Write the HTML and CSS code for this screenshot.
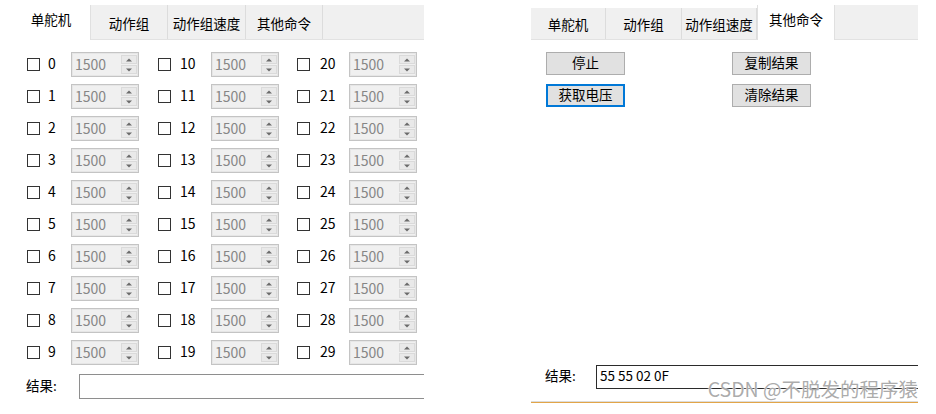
FILE: index.html
```html
<!DOCTYPE html>
<html lang="zh">
<head>
<meta charset="utf-8">
<title>舵机控制</title>
<link rel="stylesheet" href="styles.css">
</head>
<body>
<div class="page">
  <section class="panel left">
    <div class="tabs">
      <div class="tab sel first w91">单舵机</div>
      <div class="tab w77">动作组</div>
      <div class="tab w78">动作组速度</div>
      <div class="tab w77">其他命令</div>
      <div class="tab-fill"></div>
    </div>
    <div class="servos">
      <div class="col c1">
        <div class="item"><span class="cb"></span><span class="lbl">0</span><div class="spin"><span class="val">1500</span><span class="btns"><span class="up"></span><span class="down"></span></span></div></div>
        <div class="item"><span class="cb"></span><span class="lbl">1</span><div class="spin"><span class="val">1500</span><span class="btns"><span class="up"></span><span class="down"></span></span></div></div>
        <div class="item"><span class="cb"></span><span class="lbl">2</span><div class="spin"><span class="val">1500</span><span class="btns"><span class="up"></span><span class="down"></span></span></div></div>
        <div class="item"><span class="cb"></span><span class="lbl">3</span><div class="spin"><span class="val">1500</span><span class="btns"><span class="up"></span><span class="down"></span></span></div></div>
        <div class="item"><span class="cb"></span><span class="lbl">4</span><div class="spin"><span class="val">1500</span><span class="btns"><span class="up"></span><span class="down"></span></span></div></div>
        <div class="item"><span class="cb"></span><span class="lbl">5</span><div class="spin"><span class="val">1500</span><span class="btns"><span class="up"></span><span class="down"></span></span></div></div>
        <div class="item"><span class="cb"></span><span class="lbl">6</span><div class="spin"><span class="val">1500</span><span class="btns"><span class="up"></span><span class="down"></span></span></div></div>
        <div class="item"><span class="cb"></span><span class="lbl">7</span><div class="spin"><span class="val">1500</span><span class="btns"><span class="up"></span><span class="down"></span></span></div></div>
        <div class="item"><span class="cb"></span><span class="lbl">8</span><div class="spin"><span class="val">1500</span><span class="btns"><span class="up"></span><span class="down"></span></span></div></div>
        <div class="item"><span class="cb"></span><span class="lbl">9</span><div class="spin"><span class="val">1500</span><span class="btns"><span class="up"></span><span class="down"></span></span></div></div>
      </div>
      <div class="col c2">
        <div class="item"><span class="cb"></span><span class="lbl">10</span><div class="spin"><span class="val">1500</span><span class="btns"><span class="up"></span><span class="down"></span></span></div></div>
        <div class="item"><span class="cb"></span><span class="lbl">11</span><div class="spin"><span class="val">1500</span><span class="btns"><span class="up"></span><span class="down"></span></span></div></div>
        <div class="item"><span class="cb"></span><span class="lbl">12</span><div class="spin"><span class="val">1500</span><span class="btns"><span class="up"></span><span class="down"></span></span></div></div>
        <div class="item"><span class="cb"></span><span class="lbl">13</span><div class="spin"><span class="val">1500</span><span class="btns"><span class="up"></span><span class="down"></span></span></div></div>
        <div class="item"><span class="cb"></span><span class="lbl">14</span><div class="spin"><span class="val">1500</span><span class="btns"><span class="up"></span><span class="down"></span></span></div></div>
        <div class="item"><span class="cb"></span><span class="lbl">15</span><div class="spin"><span class="val">1500</span><span class="btns"><span class="up"></span><span class="down"></span></span></div></div>
        <div class="item"><span class="cb"></span><span class="lbl">16</span><div class="spin"><span class="val">1500</span><span class="btns"><span class="up"></span><span class="down"></span></span></div></div>
        <div class="item"><span class="cb"></span><span class="lbl">17</span><div class="spin"><span class="val">1500</span><span class="btns"><span class="up"></span><span class="down"></span></span></div></div>
        <div class="item"><span class="cb"></span><span class="lbl">18</span><div class="spin"><span class="val">1500</span><span class="btns"><span class="up"></span><span class="down"></span></span></div></div>
        <div class="item"><span class="cb"></span><span class="lbl">19</span><div class="spin"><span class="val">1500</span><span class="btns"><span class="up"></span><span class="down"></span></span></div></div>
      </div>
      <div class="col c3">
        <div class="item"><span class="cb"></span><span class="lbl">20</span><div class="spin"><span class="val">1500</span><span class="btns"><span class="up"></span><span class="down"></span></span></div></div>
        <div class="item"><span class="cb"></span><span class="lbl">21</span><div class="spin"><span class="val">1500</span><span class="btns"><span class="up"></span><span class="down"></span></span></div></div>
        <div class="item"><span class="cb"></span><span class="lbl">22</span><div class="spin"><span class="val">1500</span><span class="btns"><span class="up"></span><span class="down"></span></span></div></div>
        <div class="item"><span class="cb"></span><span class="lbl">23</span><div class="spin"><span class="val">1500</span><span class="btns"><span class="up"></span><span class="down"></span></span></div></div>
        <div class="item"><span class="cb"></span><span class="lbl">24</span><div class="spin"><span class="val">1500</span><span class="btns"><span class="up"></span><span class="down"></span></span></div></div>
        <div class="item"><span class="cb"></span><span class="lbl">25</span><div class="spin"><span class="val">1500</span><span class="btns"><span class="up"></span><span class="down"></span></span></div></div>
        <div class="item"><span class="cb"></span><span class="lbl">26</span><div class="spin"><span class="val">1500</span><span class="btns"><span class="up"></span><span class="down"></span></span></div></div>
        <div class="item"><span class="cb"></span><span class="lbl">27</span><div class="spin"><span class="val">1500</span><span class="btns"><span class="up"></span><span class="down"></span></span></div></div>
        <div class="item"><span class="cb"></span><span class="lbl">28</span><div class="spin"><span class="val">1500</span><span class="btns"><span class="up"></span><span class="down"></span></span></div></div>
        <div class="item"><span class="cb"></span><span class="lbl">29</span><div class="spin"><span class="val">1500</span><span class="btns"><span class="up"></span><span class="down"></span></span></div></div>
      </div>
    </div>
    <div class="result result-left">
      <span class="rlabel">结果:</span>
      <div class="rbox"></div>
    </div>
  </section>

  <section class="panel right">
    <div class="tabs tabs-right">
      <div class="tab w75">单舵机</div>
      <div class="tab w76">动作组</div>
      <div class="tab w75">动作组速度</div>
      <div class="tab sel w78">其他命令</div>
      <div class="tab-fill"></div>
    </div>
    <div class="cmds">
      <button class="btn">停止</button>
      <button class="btn">复制结果</button>
      <button class="btn focus">获取电压</button>
      <button class="btn">清除结果</button>
    </div>
    <div class="result result-right">
      <span class="rlabel">结果:</span>
      <div class="rbox dark">55 55 02 0F</div>
    </div>
    <div class="statusline"></div>
  </section>

  <div class="watermark">CSDN @不脱发的程序猿</div>
</div>
</body>
</html>
```

FILE: styles.css
```css
* { box-sizing: border-box; }

html, body {
  margin: 0;
  padding: 0;
  background: #ffffff;
}

body {
  font-family: "Noto Sans CJK SC", "Noto Sans", sans-serif;
  font-size: 13.5px;
  color: #000000;
}

.page {
  position: relative;
  width: 936px;
  height: 414px;
  display: flex;
  align-items: flex-start;
  overflow: hidden;
}

.panel {
  display: flex;
  flex-direction: column;
  overflow: hidden;
}

.left {
  width: 424px;
}

.right {
  width: 387px;
  height: 403px;
  margin-left: 107px;
}

/* ---------- tabs ---------- */
.tabs {
  display: flex;
  margin-top: 5px;
  height: 35px;
  border-bottom: 1px solid #e2e2e2;
}

.tab {
  display: flex;
  align-items: center;
  justify-content: center;
  background: #f0f0f0;
  border-right: 1px solid #dcdcdc;
  padding-top: 3px;
  white-space: nowrap;
  line-height: 1;
}

.tab.sel {
  background: #ffffff;
  padding-top: 0;
  padding-bottom: 5px;
  border-right: 1px solid #e0e0e0;
  margin-bottom: -1px;
}

.tab.sel.first {
  padding-left: 12px;
}

.tabs-right .tab {
  margin-top: 3px;
}

.tabs-right .tab.sel {
  margin-top: 0;
  border-left: 1px solid #e0e0e0;
}

.tab-fill {
  flex: 1;
  background: #f0f0f0;
}

.w91 { width: 91px; }
.w77 { width: 77px; }
.w78 { width: 78px; }
.w75 { width: 75px; }
.w76 { width: 76px; }

/* ---------- servo grid ---------- */
.servos {
  display: flex;
  margin-top: 12px;
  padding-left: 27px;
}

.col {
  display: flex;
  flex-direction: column;
  gap: 7px;
}

.c1 { width: 131px; }
.c2 { width: 139px; }
.c3 { width: 127px; }

.item {
  display: flex;
  align-items: center;
  height: 25px;
}

.cb {
  width: 13px;
  height: 13px;
  border: 1px solid #333333;
  background: #ffffff;
  flex: none;
}

.lbl {
  padding-left: 8px;
  line-height: 1;
  padding-bottom: 3px;
  font-size: 14px;
}

.c1 .lbl { width: 31px; }
.c2 .lbl { width: 40px; padding-left: 9px; }
.c3 .lbl { width: 39px; padding-left: 10px; }

.spin {
  width: 68px;
  height: 25px;
  border: 1px solid #c4c4c4;
  box-shadow: inset 0 0 0 1px #e6e6e6;
  background: #f0f0f0;
  display: flex;
  align-items: center;
  justify-content: space-between;
  padding: 2px 1px 2px 3px;
  flex: none;
}

.val {
  color: #868686;
  line-height: 1;
  padding-bottom: 2px;
  font-size: 14px;
}

.btns {
  display: flex;
  flex-direction: column;
  width: 16px;
  height: 100%;
  gap: 1px;
}

.up, .down {
  flex: 1;
  background: #e9e9e9;
  border: 1px solid #dadada;
  position: relative;
}

.up::after, .down::after {
  content: "";
  position: absolute;
  left: 50%;
  top: 50%;
  width: 0;
  height: 0;
  border-left: 3px solid transparent;
  border-right: 3px solid transparent;
  transform: translate(-50%, -50%);
}

.up::after { border-bottom: 3px solid #6a6a6a; }
.down::after { border-top: 3px solid #6a6a6a; }

/* ---------- result rows ---------- */
.result {
  display: flex;
  align-items: center;
  white-space: nowrap;
}

.result-left {
  margin-top: 9px;
  padding-left: 26px;
}

.result-left .rlabel { width: 53px; }

.rlabel {
  flex: none;
  line-height: 1;
  padding-bottom: 2px;
}

.rbox {
  flex: none;
  width: 420px;
  height: 25px;
  border: 1px solid #8e8e8e;
  background: #ffffff;
  display: flex;
  align-items: center;
  padding-left: 3px;
  line-height: 1;
}

.rbox.dark {
  border-color: #2b2b2b;
  height: 24px;
  padding-bottom: 2px;
}

.result-right {
  margin-top: auto;
  padding-left: 14px;
}

.result-right .rlabel { width: 51px; }

.statusline {
  margin-top: 12px;
  height: 2px;
  border-top: 1px solid #dcdcdc;
  background: #e2a548;
}

/* ---------- command buttons ---------- */
.cmds {
  display: grid;
  grid-template-columns: 186px 79px;
  grid-auto-rows: 23px;
  row-gap: 9px;
  margin-top: 12px;
  padding-left: 15px;
}

.btn {
  width: 79px;
  height: 23px;
  font-family: inherit;
  font-size: 13.5px;
  line-height: 1;
  color: #000000;
  background: #e1e1e1;
  border: 1px solid #adadad;
  border-radius: 0;
  padding: 0 0 2px 0;
  margin: 0;
}

.btn.focus {
  border: 2px solid #0078d7;
}

/* ---------- watermark overlay ---------- */
.watermark {
  position: absolute;
  right: 18px;
  top: 377px;
  font-size: 19.5px;
  line-height: 24px;
  color: rgba(150, 150, 150, 0.8);
  text-shadow: 0 0 2px #ffffff, 0 0 1px #ffffff;
  white-space: nowrap;
}
```
